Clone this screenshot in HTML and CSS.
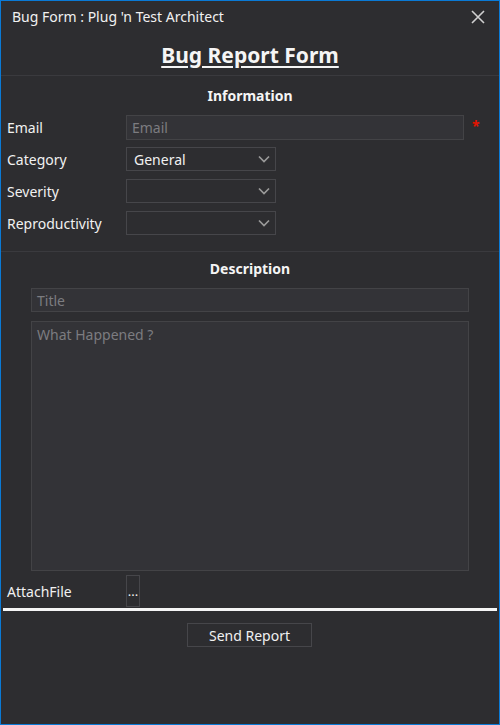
FILE: index.html
```html
<!DOCTYPE html>
<html>
<head>
<meta charset="utf-8">
<link rel="stylesheet" href="styles.css">
</head>
<body>
<div class="window">
  <div class="titlebar">
    <span class="title">Bug Form : Plug 'n Test Architect</span>
    <span class="close"><svg width="14" height="14" viewBox="0 0 14 14"><path d="M1 1L13 13M13 1L1 13" stroke="#d0d0d0" stroke-width="1.6"/></svg></span>
  </div>
  <div class="heading"><span>Bug Report Form</span></div>
  <div class="sep"></div>
  <div class="section-title info-title">Information</div>
  <div class="form">
    <div class="row email-row">
      <label class="lbl">Email</label>
      <div class="input email-input placeholder">Email</div>
      <span class="req">*</span>
    </div>
    <div class="row">
      <label class="lbl">Category</label>
      <div class="select"><span class="val">General</span><svg class="chev" width="12" height="8" viewBox="0 0 12 8"><path d="M1 1.5L6 6.5L11 1.5" stroke="#9a9a9a" stroke-width="1.7" fill="none"/></svg></div>
    </div>
    <div class="row">
      <label class="lbl">Severity</label>
      <div class="select"><span class="val"></span><svg class="chev" width="12" height="8" viewBox="0 0 12 8"><path d="M1 1.5L6 6.5L11 1.5" stroke="#9a9a9a" stroke-width="1.7" fill="none"/></svg></div>
    </div>
    <div class="row">
      <label class="lbl">Reproductivity</label>
      <div class="select"><span class="val"></span><svg class="chev" width="12" height="8" viewBox="0 0 12 8"><path d="M1 1.5L6 6.5L11 1.5" stroke="#9a9a9a" stroke-width="1.7" fill="none"/></svg></div>
    </div>
  </div>
  <div class="sep sep2"></div>
  <div class="section-title desc-title">Description</div>
  <div class="desc">
    <div class="input title-input placeholder">Title</div>
    <div class="textarea placeholder">What Happened ?</div>
  </div>
  <div class="attach">
    <label class="lbl">AttachFile</label>
    <div class="browse">...</div>
  </div>
  <div class="whiteline"></div>
  <div class="actions"><div class="send">Send Report</div></div>
</div>
</body>
</html>
```
FILE: styles.css
```css
html, body { margin: 0; padding: 0; background: #2d2d30; }
body { font-family: "Noto Sans", "Open Sans", sans-serif; font-size: 14px; color: #f1f1f1; }
.window {
  width: 500px; height: 725px; box-sizing: border-box;
  border: 1px solid #0a7ad6; background: #2d2d30;
  display: flex; flex-direction: column;
}
.titlebar { height: 33px; flex: none; display: flex; align-items: center; justify-content: space-between; padding: 0 14px 0 11px; }
.title { font-size: 14px; color: #f1f1f1; margin-top: -2px; }
.close { display: flex; margin-top: -2px; }
.heading { height: 41px; flex: none; display: flex; align-items: center; justify-content: center; }
.heading span { font-size: 21px; font-weight: bold; text-decoration: underline; text-underline-offset: 3px; text-decoration-thickness: 2px; color: #f5f5f5; }
.sep { height: 1px; flex: none; background: #3a3a3e; }
.section-title { text-align: center; font-weight: bold; font-size: 14px; color: #f5f5f5; flex: none; }
.info-title { height: 39px; line-height: 40px; }
.form { display: flex; flex-direction: column; gap: 8px; padding-left: 6px; }
.row { display: flex; align-items: center; height: 24px; }
.email-row { height: 25px; margin-bottom: -1px; }
.lbl { width: 119px; flex: none; color: #f1f1f1; }
.input, .select, .textarea { box-sizing: border-box; border: 1px solid #434346; background: #333337; }
.input { height: 100%; display: flex; align-items: center; padding-left: 5px; }
.email-input { width: 338px; }
.placeholder { color: #7c7c80; }
.req { color: #e51400; margin-left: 8px; font-weight: bold; font-size: 14px; margin-top: -4px; }
.select { width: 150px; height: 24px; display: flex; align-items: center; justify-content: space-between; padding: 0 5px 0 7px; background: #2d2d30; border-color: #46464a; }
.val { color: #f1f1f1; }
.sep2 { margin-top: 16px; }
.desc-title { height: 34px; line-height: 34px; }
.desc { padding-left: 30px; display: flex; flex-direction: column; gap: 9px; margin-top: 2px; }
.title-input { width: 438px; height: 24px; flex: none; }
.textarea { width: 438px; height: 250px; padding: 3px 5px; flex: none; }
.attach { display: flex; align-items: center; height: 32px; padding-left: 6px; margin-top: 4px; flex: none; }
.browse { width: 14px; height: 32px; box-sizing: border-box; border: 1px solid #46464a; display: flex; align-items: center; justify-content: center; font-size: 13px; color: #f1f1f1; }
.whiteline { height: 3px; flex: none; background: #f5f5f5; margin: 1px 2px 0 2px; }
.actions { display: flex; justify-content: center; padding-top: 12px; padding-right: 1px; }
.send { width: 125px; height: 24px; box-sizing: border-box; border: 1px solid #46464a; display: flex; align-items: center; justify-content: center; color: #f1f1f1; }
```
